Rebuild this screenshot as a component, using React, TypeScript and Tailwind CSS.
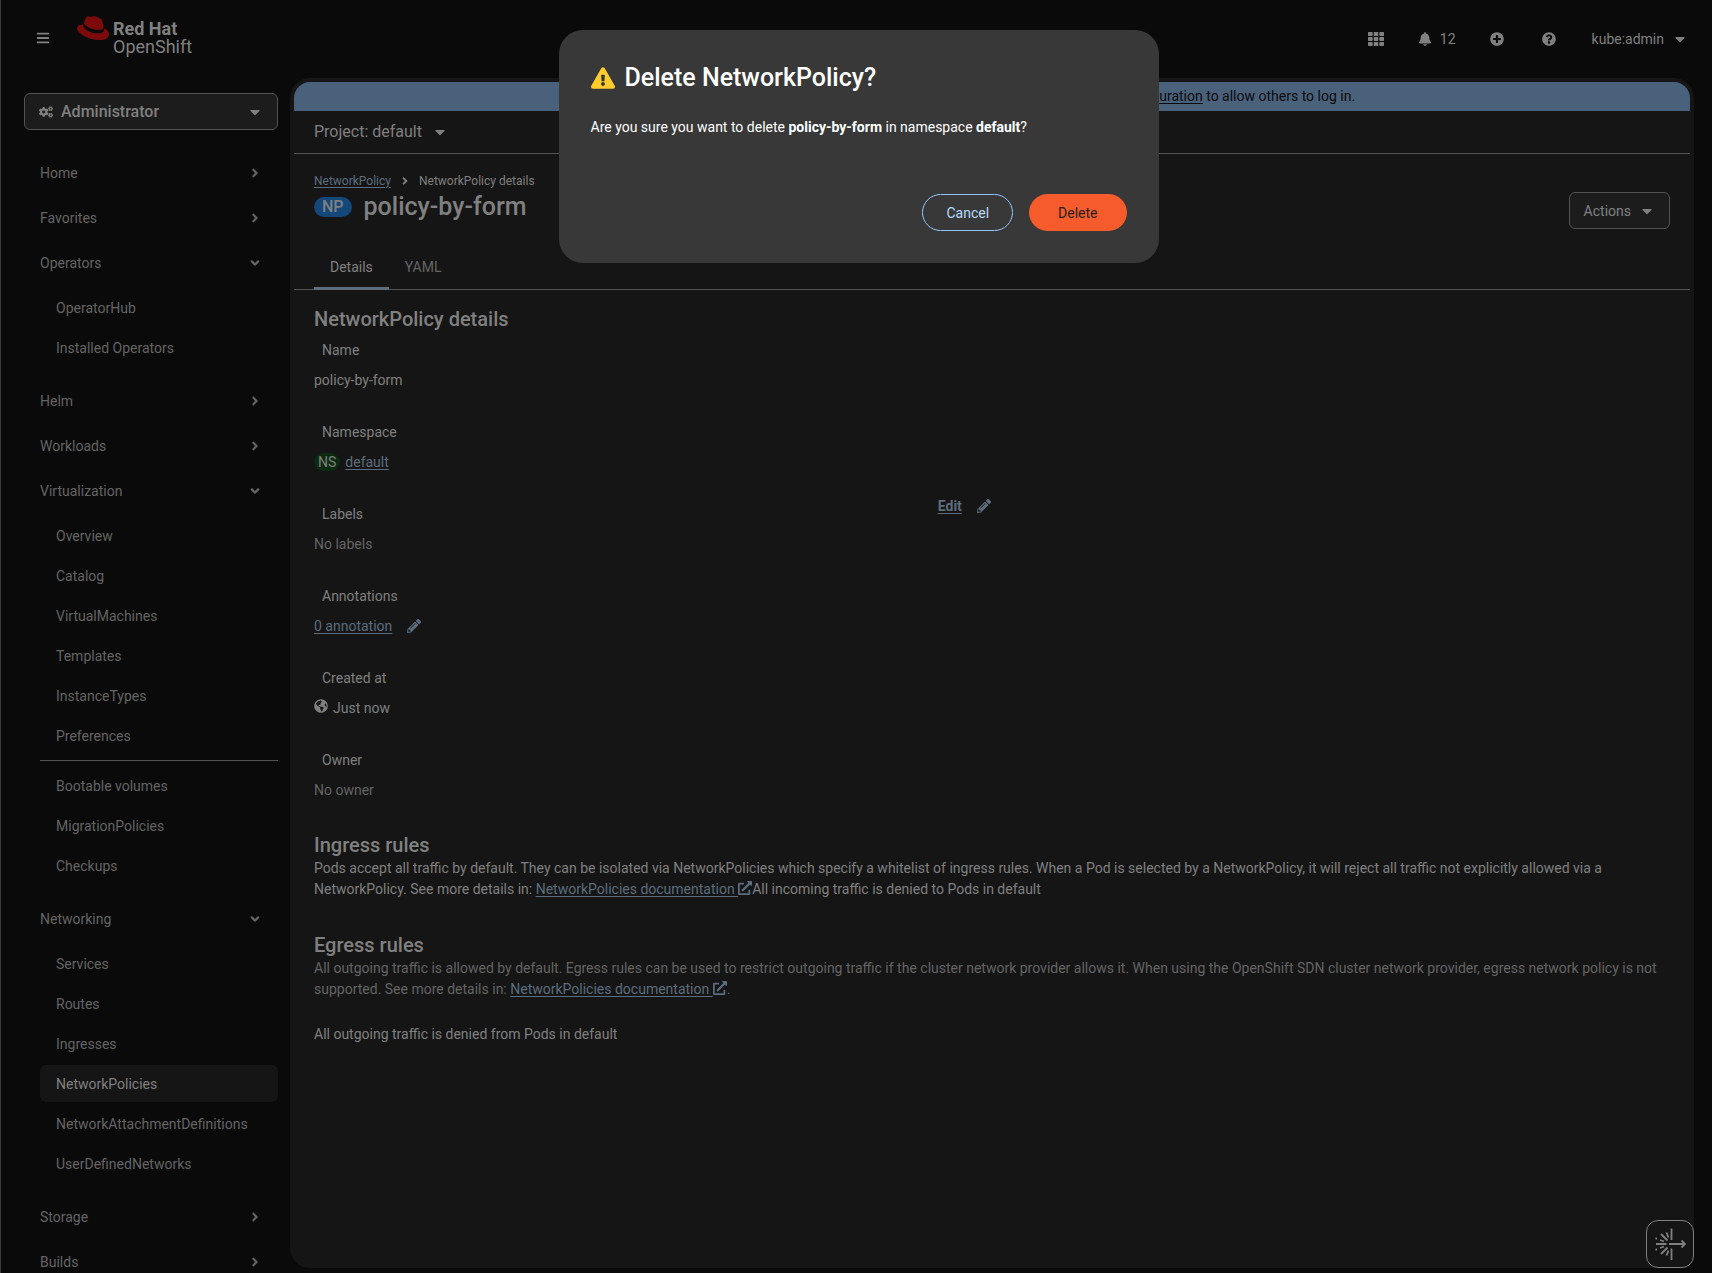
import { FaAngleDown, FaAngleRight, FaBars, FaBell, FaCaretDown, FaCogs, FaExclamationTriangle, FaExternalLinkAlt, FaGlobeAmericas, FaPencilAlt, FaPlusCircle, FaQuestionCircle, FaRedhat, FaTh } from "react-icons/fa";

type NavGroup = {
  label: string;
  // each inner list is separated from the next one by a rule
  sections?: string[][];
};

const NAV: NavGroup[] = [
  { label: "Home" },
  { label: "Favorites" },
  { label: "Operators", sections: [["OperatorHub", "Installed Operators"]] },
  { label: "Helm" },
  { label: "Workloads" },
  {
    label: "Virtualization",
    sections: [
      ["Overview", "Catalog", "VirtualMachines", "Templates", "InstanceTypes", "Preferences"],
      ["Bootable volumes", "MigrationPolicies", "Checkups"],
    ],
  },
  {
    label: "Networking",
    sections: [
      ["Services", "Routes", "Ingresses", "NetworkPolicies", "NetworkAttachmentDefinitions", "UserDefinedNetworks"],
    ],
  },
  { label: "Storage" },
  { label: "Builds" },
];

const ACTIVE = "NetworkPolicies";

function Masthead() {
  return (
    <header className="flex h-[78px] shrink-0 items-center pl-8 pr-6">
      <button type="button" aria-label="Global navigation" className="pb-1 pl-[3px] pr-1 pt-0.5">
        <FaBars className="size-3.5" />
      </button>
      <a href="#" className="ml-[23px] flex h-[78px] items-start gap-1 pt-3">
        <FaRedhat className="size-8 text-[#7d0a0a]" />
        <span className="pt-2 text-lg leading-[18px]">
          <span className="block font-bold">Red Hat</span>
          <span className="block">OpenShift</span>
        </span>
      </a>
      <div className="ml-auto flex items-center">
        <button type="button" aria-label="Application launcher">
          <FaTh className="size-4" />
        </button>
        <button type="button" aria-label="Notifications" className="ml-[34px] flex items-center gap-2">
          <FaBell className="size-3.5" />
          12
        </button>
        <button type="button" aria-label="Quick create" className="ml-[34px]">
          <FaPlusCircle className="size-3.5" />
        </button>
        <button type="button" aria-label="Help" className="ml-[38px]">
          <FaQuestionCircle className="size-3.5" />
        </button>
        <button type="button" className="ml-9 flex items-center gap-2">
          kube:admin
          <FaCaretDown className="size-4" />
        </button>
      </div>
    </header>
  );
}

function Sidebar() {
  return (
    <aside className="w-[289px] shrink-0 pl-[23px] pr-3 pt-[15px]">
      <button
        type="button"
        className="flex h-[37px] w-full items-center rounded-md border border-[#525252] bg-[#1c1c1c] px-3.5 text-base font-medium"
      >
        <FaCogs className="mr-2 size-3.5" />
        Administrator
        <FaCaretDown className="ml-auto size-4" />
      </button>
      <nav className="pl-4 pt-6 text-[#646464]">
        <ul className="flex flex-col gap-2">
          {NAV.map((group) => (
            <li key={group.label}>
              <button type="button" className="flex h-[37px] w-full items-center justify-between pr-4">
                {group.label}
                {group.sections ? <FaAngleDown className="size-3.5" /> : <FaAngleRight className="size-3.5" />}
              </button>
              {group.sections && (
                <div className="py-2">
                  {group.sections.map((items, i) => (
                    <ul
                      key={items[0]}
                      className={
                        i > 0
                          ? "mt-1.5 flex flex-col gap-[3px] border-t border-[#525252] pt-1.5"
                          : "flex flex-col gap-[3px]"
                      }
                    >
                      {items.map((item) => (
                        <li key={item}>
                          <a
                            href="#"
                            className={
                              item === ACTIVE
                                ? "flex h-[37px] items-center rounded-md bg-[#151515] pl-4 text-[#808080]"
                                : "flex h-[37px] items-center pl-4"
                            }
                          >
                            {item}
                          </a>
                        </li>
                      ))}
                    </ul>
                  ))}
                </div>
              )}
            </li>
          ))}
        </ul>
      </nav>
    </aside>
  );
}

function Field({ label, children }: { label: string; children: React.ReactNode }) {
  return (
    <div className="mb-8">
      <dt className="mb-2 pl-2 leading-[21px]">{label}</dt>
      <dd className="flex h-[21px] items-center">{children}</dd>
    </div>
  );
}

function DocsLink() {
  return (
    <a href="#" className="text-[#5c6d7e] underline underline-offset-2">
      NetworkPolicies documentation <FaExternalLinkAlt className="-mt-1 inline size-3.5" />
    </a>
  );
}

function Details() {
  return (
    <div className="px-5 pt-4">
      <h2 className="mb-2 text-xl font-medium leading-[26px]">NetworkPolicy details</h2>
      <div className="grid grid-cols-[46%_1fr]">
        <dl>
          <Field label="Name">policy-by-form</Field>
          <Field label="Namespace">
            <span className="mr-[5px] rounded-full bg-[#0b2a10] px-1 leading-[18px]">NS</span>
            <a href="#" className="text-[#5c6d7e] underline underline-offset-2">
              default
            </a>
          </Field>
          <Field label="Labels">
            <span className="text-[#646464]">No labels</span>
          </Field>
          <Field label="Annotations">
            <a href="#" className="flex items-center gap-[15px] text-[#5c6d7e]">
              <span className="underline underline-offset-2">0 annotation</span>
              <FaPencilAlt className="size-3.5" />
            </a>
          </Field>
          <Field label="Created at">
            <FaGlobeAmericas className="mb-1 mr-[5px] size-3.5" />
            Just now
          </Field>
          <Field label="Owner">
            <span className="text-[#646464]">No owner</span>
          </Field>
        </dl>
        <div className="pt-39">
          <a href="#" className="flex items-center gap-[15px] font-bold text-[#5c6d7e]">
            <span className="underline underline-offset-2">Edit</span>
            <FaPencilAlt className="size-3.5" />
          </a>
        </div>
      </div>

      <h2 className="text-xl font-medium leading-[26px]">Ingress rules</h2>
      <p className="mb-8 leading-[21px]">
        Pods accept all traffic by default. They can be isolated via NetworkPolicies which specify a whitelist of
        ingress rules. When a Pod is selected by a NetworkPolicy, it will reject all traffic not explicitly allowed via
        a NetworkPolicy. See more details in: <DocsLink />
        All incoming traffic is denied to Pods in default
      </p>
      <h2 className="text-xl font-medium leading-[26px]">Egress rules</h2>
      <p className="mb-6 leading-[21px] text-[#646464]">
        All outgoing traffic is allowed by default. Egress rules can be used to restrict outgoing traffic if the cluster
        network provider allows it. When using the OpenShift SDN cluster network provider, egress network policy is not
        supported. See more details in: <DocsLink />.
      </p>
      <p className="leading-[21px]">All outgoing traffic is denied from Pods in default</p>
    </div>
  );
}

function DeleteModal() {
  return (
    <div className="absolute inset-x-0 top-0 flex justify-center pl-1 pt-[30px]">
      <div
        role="dialog"
        aria-modal="true"
        aria-labelledby="modal-title"
        className="w-[600px] rounded-3xl bg-[#383838] p-8 text-white"
      >
        <h1 id="modal-title" className="flex items-center gap-2.5 text-[25px] font-medium leading-[31px]">
          <FaExclamationTriangle className="size-6 text-[#ffcc2e]" />
          Delete NetworkPolicy?
        </h1>
        <p className="mt-6 leading-[21px]">
          Are you sure you want to delete <strong>policy-by-form</strong> in namespace <strong>default</strong>?
        </p>
        <div className="mt-14 flex justify-end gap-4">
          <button type="button" className="h-[37px] rounded-full border border-[#92c5f9] px-[23px] text-[#b9dafc]">
            Cancel
          </button>
          <button type="button" className="h-[37px] rounded-full bg-[#f65b2b] px-[29px] text-[#1f1f1f]">
            Delete
          </button>
        </div>
      </div>
    </div>
  );
}

function FloatingTool() {
  return (
    <button
      type="button"
      aria-label="Open assistant"
      className="fixed bottom-[5px] right-[18px] flex size-12 items-center justify-center rounded-xl border border-[#808080] bg-[#151515]"
    >
      <svg viewBox="0 0 32 32" className="size-8 shrink-0" fill="none" stroke="currentColor" strokeWidth="1.8">
        <path d="M17.500 0.500v11.500M17.500 20.500v11.500M2 16h10.500M15 16h16M27.500 12.500l3.500 3.500l-3.500 3.500" />
        <path d="M7 6l6.500 6.500M7 26l6.500-6.500M12.500 4.500l2 5M12.500 27.500l2-5M6 12l4 1.500M6 20l4-1.500" />
        <path d="M1.500 10.500h1.500M1.500 21.500h1.500" />
      </svg>
    </button>
  );
}

export default function App() {
  return (
    <div className="relative flex h-screen flex-col overflow-hidden border-l border-[#3a3a3a] bg-[#0a0a0a] font-['Roboto',sans-serif] text-sm text-[#808080]">
      <Masthead />
      <div className="flex min-h-0 flex-1">
        <Sidebar />
        <main className="mb-[5px] mr-[18px] flex-1 overflow-hidden rounded-[20px] border-4 border-[#151515] bg-[#151515]">
          <div className="h-[29px] bg-[#4a617b] text-center leading-[29px] text-[#0a0a0a]">
            You are logged in as a temporary administrative user. Update the{" "}
            <a href="#" className="underline underline-offset-2">
              cluster OAuth configuration
            </a>{" "}
            to allow others to log in.
          </div>
          <div className="flex h-[43px] items-center border-b border-[#525252] px-5">
            <button type="button" className="flex items-center gap-2.5 text-base">
              Project: default
              <FaCaretDown className="size-4" />
            </button>
          </div>
          <div className="flex justify-between px-5 pt-4">
            <div>
              <nav className="flex h-[21px] items-center text-xs">
                <a href="#" className="text-[#5c6d7e] underline underline-offset-2">
                  NetworkPolicy
                </a>
                <FaAngleRight className="mx-2 size-3" />
                NetworkPolicy details
              </nav>
              <h1 className="flex items-center gap-3 text-[25px] font-medium leading-[31px]">
                <span className="rounded-full bg-[#14487a] px-2 text-base leading-5">NP</span>
                policy-by-form
              </h1>
            </div>
            <button
              type="button"
              className="mt-[22px] flex h-[37px] items-center gap-2 rounded-md border border-[#525252] bg-[#1c1c1c] px-3.5"
            >
              Actions
              <FaCaretDown className="size-4" />
            </button>
          </div>
          <div role="tablist" className="mt-[15px] flex h-[46px] border-b border-[#525252] px-5">
            <button
              type="button"
              role="tab"
              aria-selected="true"
              className="-mb-px border-b-[3px] border-[#5c6d7e] px-4 pt-[3px]"
            >
              Details
            </button>
            <button type="button" role="tab" aria-selected="false" className="px-4 text-[#646464]">
              YAML
            </button>
          </div>
          <Details />
        </main>
      </div>
      <FloatingTool />
      <DeleteModal />
    </div>
  );
}
